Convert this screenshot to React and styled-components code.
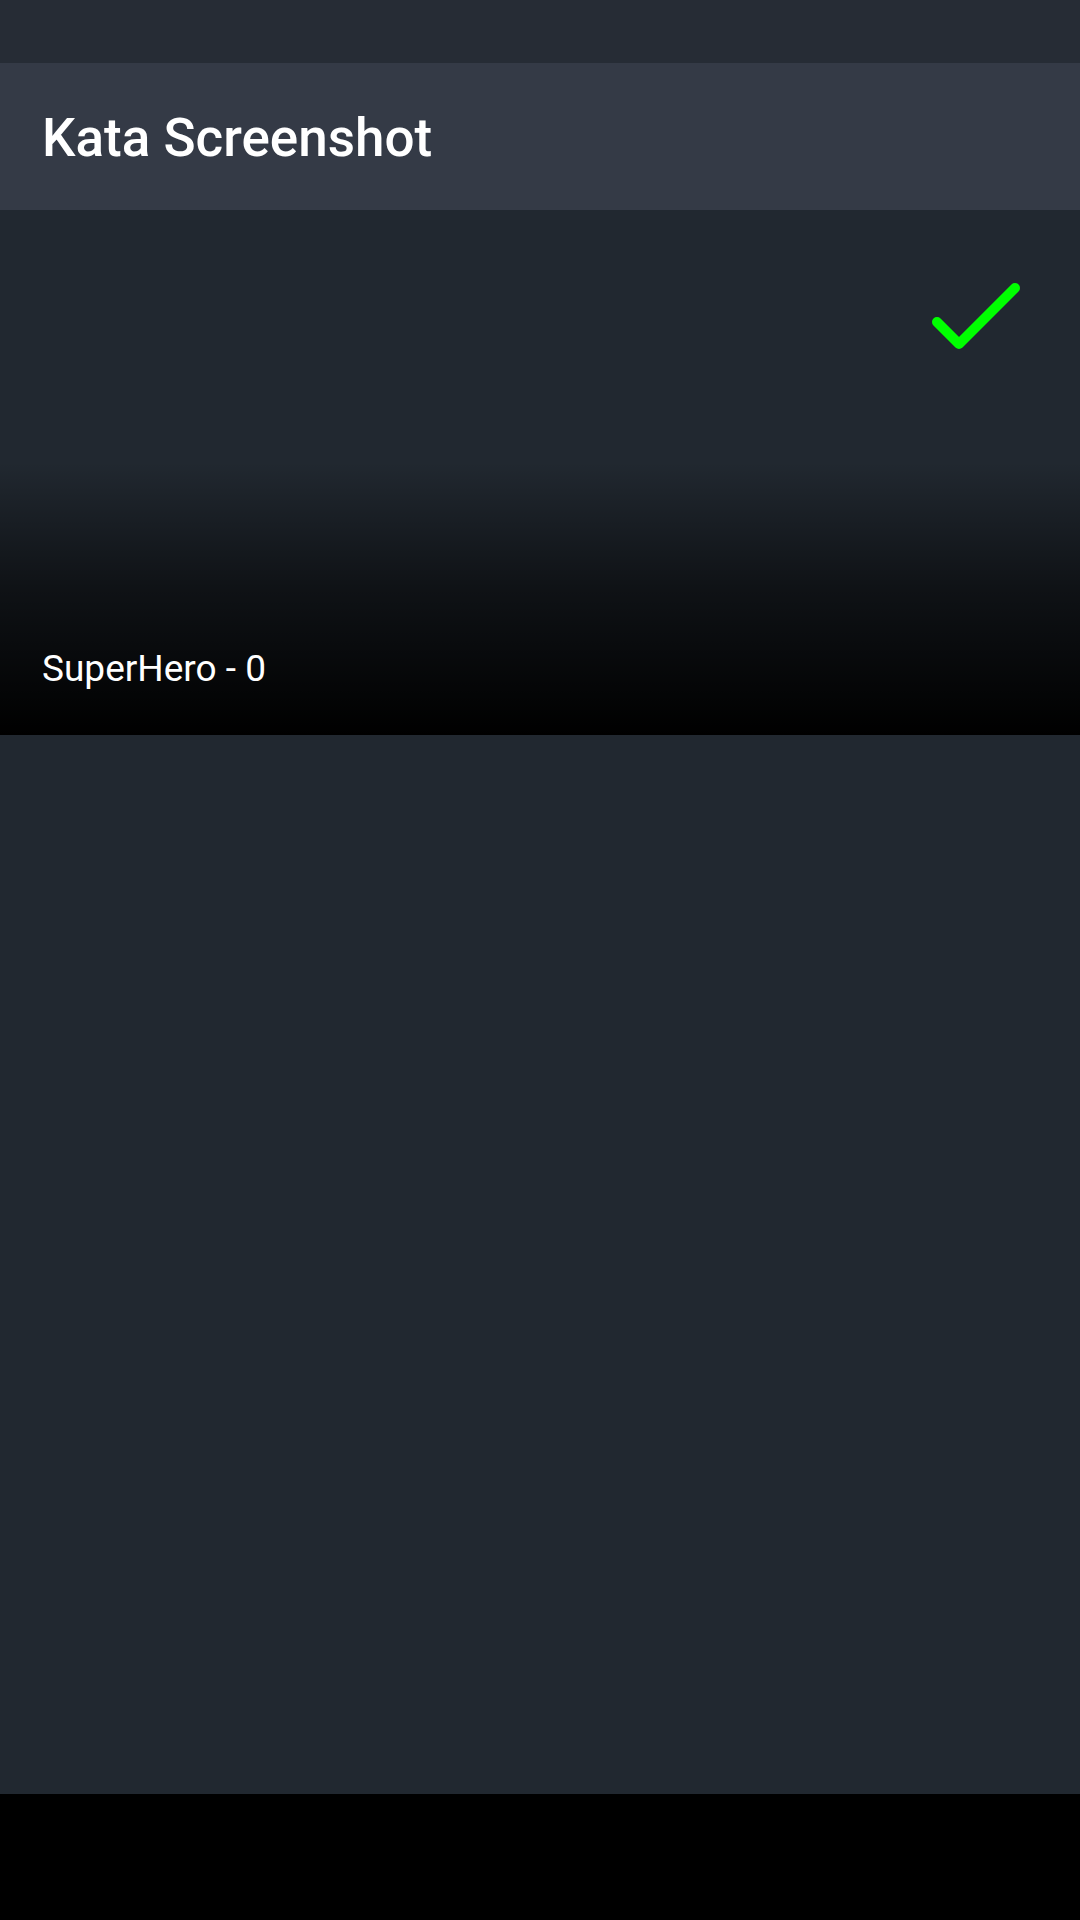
import React from "react";
import styled, { createGlobalStyle } from "styled-components";

const Global = createGlobalStyle`
  html, body { margin: 0; padding: 0; background: #000; }
  body { font-family: Roboto, "Noto Sans", sans-serif; }
  * { box-sizing: border-box; }
`;

const Screen = styled.div`
  width: 1080px;
  height: 1920px;
  display: flex;
  flex-direction: column;
  background: #000;
  overflow: hidden;
`;

const StatusBar = styled.div`
  height: 63px;
  flex: none;
  background: #262c35;
`;

const Toolbar = styled.header`
  height: 147px;
  flex: none;
  background: #343a46;
  display: flex;
  align-items: center;
  padding: 3px 42px 0;
`;

const Title = styled.h1`
  margin: 0;
  font-family: Roboto, sans-serif;
  font-weight: 500;
  font-size: 53px;
  color: #ffffff;
  letter-spacing: 0;
`;

const Content = styled.main`
  flex: 1;
  background: #212830;
  display: flex;
  flex-direction: column;
`;

const Card = styled.section`
  height: 525px;
  display: flex;
  flex-direction: column;
  justify-content: space-between;
  padding: 66px 52px 45px 42px;
  background: linear-gradient(
    to bottom,
    rgba(0, 0, 0, 0) 0%,
    rgba(0, 0, 0, 0) 48%,
    rgba(0, 0, 0, 0.55) 72%,
    rgba(0, 0, 0, 1) 100%
  );
`;

const CheckIcon = styled.svg`
  align-self: flex-end;
  display: block;
`;

const Label = styled.div`
  font-family: Roboto, sans-serif;
  font-size: 37px;
  font-weight: 400;
  color: #ffffff;
  line-height: 43px;
`;

const NavBar = styled.div`
  height: 126px;
  flex: none;
  background: #000;
`;

export default function App() {
  return (
    <>
      <Global />
      <Screen>
        <StatusBar />
        <Toolbar>
          <Title>Kata Screenshot</Title>
        </Toolbar>
        <Content>
          <Card>
            <CheckIcon width="100" height="80" viewBox="0 0 100 80">
              <polyline
                points="9,46 31,68 87,12"
                fill="none"
                stroke="#00ff00"
                strokeWidth="10"
                strokeLinecap="round"
                strokeLinejoin="round"
              />
            </CheckIcon>
            <Label>SuperHero - 0</Label>
          </Card>
        </Content>
        <NavBar />
      </Screen>
    </>
  );
}
